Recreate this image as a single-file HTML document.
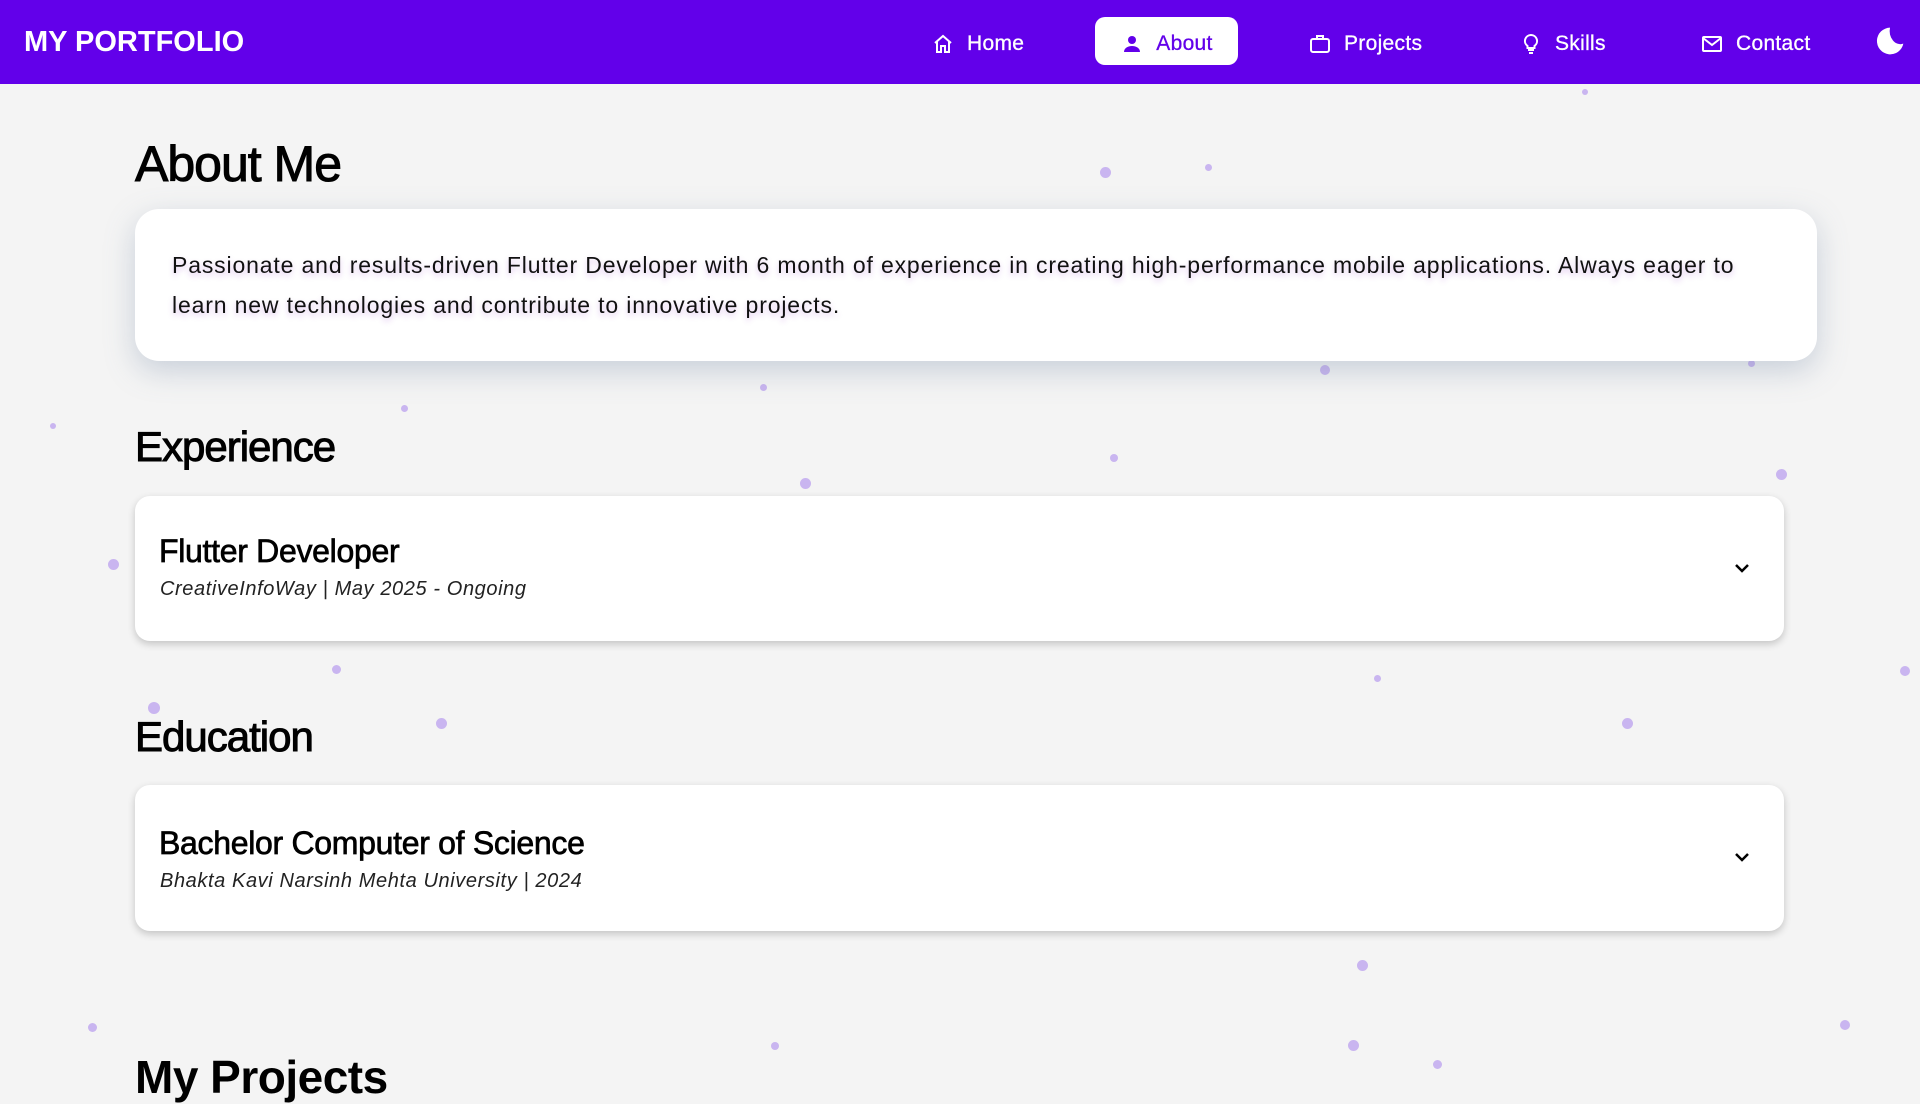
<!DOCTYPE html>
<html><head><meta charset="utf-8"><style>
*{margin:0;padding:0;box-sizing:border-box}
body{width:1920px;height:1080px;overflow:hidden;background:#f4f4f4;font-family:"Liberation Sans",sans-serif;position:relative;color:#000}
nav{position:absolute;left:0;top:0;width:1920px;height:84px;background:#6200ea}
.logo{position:absolute;left:24px;top:26px;font-size:29px;font-weight:bold;color:#fff}
.it{position:absolute;top:20px;height:48px;display:flex;align-items:center;color:#fff;font-size:21px;gap:12px;letter-spacing:0.3px;-webkit-text-stroke:0.3px currentColor}
.it svg{width:24px;height:24px}
.pill{top:17px;padding-top:5px;background:#fff;color:#6200ea;border-radius:10px;left:1095px;width:143px;justify-content:center}
h2{position:absolute;left:135px;font-weight:normal;letter-spacing:-1px;-webkit-text-stroke:1px #000}
.card{position:absolute;left:135px;background:#fff}
.dot{position:absolute;border-radius:50%;background:#c9b5f0}
.t{position:absolute;left:24px;font-size:32px;letter-spacing:-0.3px;-webkit-text-stroke:0.7px #000}
.s{position:absolute;left:25px;font-size:20px;font-style:italic;color:#222;letter-spacing:0.6px}
.chev{position:absolute;left:1595px;width:24px;height:24px}
</style></head><body>
<div class="dot" style="left:1100px;top:167px;width:11px;height:11px"></div>
<div class="dot" style="left:1205px;top:164px;width:7px;height:7px"></div>
<div class="dot" style="left:1582px;top:89px;width:6px;height:6px"></div>
<div class="dot" style="left:1320px;top:365px;width:10px;height:10px"></div>
<div class="dot" style="left:1748px;top:360px;width:7px;height:7px"></div>
<div class="dot" style="left:50px;top:423px;width:6px;height:6px"></div>
<div class="dot" style="left:401px;top:405px;width:7px;height:7px"></div>
<div class="dot" style="left:760px;top:384px;width:7px;height:7px"></div>
<div class="dot" style="left:800px;top:478px;width:11px;height:11px"></div>
<div class="dot" style="left:1110px;top:454px;width:8px;height:8px"></div>
<div class="dot" style="left:1776px;top:469px;width:11px;height:11px"></div>
<div class="dot" style="left:108px;top:559px;width:11px;height:11px"></div>
<div class="dot" style="left:332px;top:665px;width:9px;height:9px"></div>
<div class="dot" style="left:148px;top:702px;width:12px;height:12px"></div>
<div class="dot" style="left:436px;top:718px;width:11px;height:11px"></div>
<div class="dot" style="left:1374px;top:675px;width:7px;height:7px"></div>
<div class="dot" style="left:1622px;top:718px;width:11px;height:11px"></div>
<div class="dot" style="left:1900px;top:666px;width:10px;height:10px"></div>
<div class="dot" style="left:1357px;top:960px;width:11px;height:11px"></div>
<div class="dot" style="left:88px;top:1023px;width:9px;height:9px"></div>
<div class="dot" style="left:771px;top:1042px;width:8px;height:8px"></div>
<div class="dot" style="left:1348px;top:1040px;width:11px;height:11px"></div>
<div class="dot" style="left:1840px;top:1020px;width:10px;height:10px"></div>
<div class="dot" style="left:1433px;top:1060px;width:9px;height:9px"></div>
<nav>
<div class="logo">MY PORTFOLIO</div>
<div class="it" style="left:931px"><svg viewBox="0 0 24 24" fill="none" stroke="#fff" stroke-width="2"><path d="M4 11 12 4l8 7M6 9.5V20h4v-6h4v6h4V9.5"/></svg>Home</div>
<div class="it pill"><svg viewBox="0 0 24 24" fill="#6200ea"><circle cx="12" cy="8" r="4"/><path d="M4 20c0-4 4-6 8-6s8 2 8 6z"/></svg>About</div>
<div class="it" style="left:1308px"><svg viewBox="0 0 24 24" fill="none" stroke="#fff" stroke-width="2"><rect x="3" y="7" width="18" height="13" rx="2"/><path d="M9 7V4h6v3"/></svg>Projects</div>
<div class="it" style="left:1519px"><svg viewBox="0 0 24 24" fill="none" stroke="#fff" stroke-width="2"><path d="M9 18h6M10 21h4M12 3a6 6 0 0 0-3.5 10.9V16h7v-2.1A6 6 0 0 0 12 3z"/></svg>Skills</div>
<div class="it" style="left:1700px"><svg viewBox="0 0 24 24" fill="none" stroke="#fff" stroke-width="2"><rect x="3" y="5" width="18" height="14" rx="1"/><path d="m3 6 9 7 9-7"/></svg>Contact</div>
<svg style="position:absolute;left:1874px;top:25px;width:32px;height:32px" viewBox="0 0 24 24" fill="#fff"><path d="M12 2a8 10 0 0 0 10 12A10 10 0 1 1 12 2z"/></svg>
</nav>
<h2 style="top:135px;font-size:50px">About Me</h2>
<div class="card" style="top:209px;width:1682px;height:152px;border-radius:24px;box-shadow:0 10px 30px rgba(120,140,170,.35)">
<p style="position:absolute;left:37px;top:36px;width:1595px;font-size:23px;line-height:40px;letter-spacing:0.85px;color:#111;text-shadow:0 3px 6px rgba(150,60,200,.3)">Passionate and results-driven Flutter Developer with 6 month of experience in creating high-performance mobile applications. Always eager to learn new technologies and contribute to innovative projects.</p></div>
<h2 style="top:423px;font-size:42px">Experience</h2>
<div class="card" style="top:496px;width:1649px;height:145px;border-radius:15px;box-shadow:0 3px 8px rgba(0,0,0,.2)">
<div class="t" style="top:37px">Flutter Developer</div>
<div class="s" style="top:82px">CreativeInfoWay | May 2025 - Ongoing</div>
<svg class="chev" style="top:60px" viewBox="0 0 24 24" fill="none" stroke="#000" stroke-width="2.5"><path d="m6 9 6 6 6-6"/></svg></div>
<h2 style="top:713px;font-size:42px">Education</h2>
<div class="card" style="top:785px;width:1649px;height:146px;border-radius:15px;box-shadow:0 3px 8px rgba(0,0,0,.2)">
<div class="t" style="top:40px">Bachelor Computer of Science</div>
<div class="s" style="top:85px">Bhakta Kavi Narsinh Mehta University | 2024</div>
<svg class="chev" style="top:60px" viewBox="0 0 24 24" fill="none" stroke="#000" stroke-width="2.5"><path d="m6 9 6 6 6-6"/></svg></div>
<h2 style="top:1050px;font-size:46px;font-weight:bold;letter-spacing:-0.5px;-webkit-text-stroke:0">My Projects</h2>
</body></html>
